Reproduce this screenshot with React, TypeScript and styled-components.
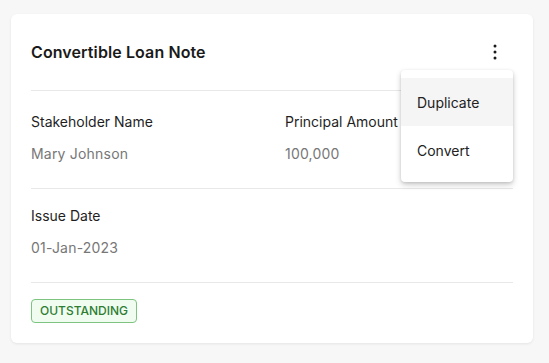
import React from 'react'
import styled, { createGlobalStyle } from 'styled-components'

const GlobalStyle = createGlobalStyle`
	body {
		margin: 0;
		background: #f7f7f7;
		font-family: Inter, "Noto Sans", sans-serif;
	}
`

const Page = styled.div`
	padding: 14px 16px 19px 11px;
`

const Card = styled.section`
	position: relative;
	width: 522px;
	box-sizing: border-box;
	background: #fff;
	border-radius: 6px;
	box-shadow: 0 1px 3px rgba(0, 0, 0, 0.08);
	padding: 0 20px 20px;
`

const Header = styled.div`
	display: flex;
	align-items: center;
	justify-content: space-between;
	height: 76px;
	border-bottom: 1px solid #e8e8e8;
`

const Title = styled.h2`
	margin: 0;
	font-size: 16px;
	font-weight: 600;
	letter-spacing: 0.1px;
	color: #1a1a1a;
`

const IconButton = styled.button`
	display: flex;
	align-items: center;
	justify-content: center;
	width: 24px;
	height: 24px;
	margin-right: 6px;
	padding: 0;
	border: none;
	background: none;
	color: #1a1a1a;
`

const Section = styled.div<{ $top: number; $bottom: number }>`
	display: grid;
	grid-template-columns: 1fr 1fr;
	column-gap: 26px;
	padding: ${p => p.$top}px 0 ${p => p.$bottom}px;
	border-bottom: 1px solid #e8e8e8;
`

const Field = styled.div`
	display: flex;
	flex-direction: column;
	gap: 14px;
`

const Label = styled.span`
	font-size: 14px;
	color: #1f1f1f;
	line-height: 18px;
`

const Value = styled.span`
	font-size: 14px;
	color: #777;
	line-height: 18px;
	letter-spacing: 0.2px;
`

const Footer = styled.div`
	padding-top: 16px;
`

const Badge = styled.span`
	display: inline-block;
	padding: 4px 8px;
	font-size: 12px;
	font-weight: 500;
	line-height: 14px;
	color: #2e7d32;
	background: #f1fcf1;
	border: 1px solid #7cc47f;
	border-radius: 4px;
`

const Menu = styled.ul`
	position: absolute;
	top: 56px;
	right: 20px;
	width: 112px;
	margin: 0;
	padding: 8px 0;
	list-style: none;
	background: #fff;
	border-radius: 4px;
	box-shadow: 0 3px 6px rgba(0, 0, 0, 0.18), 0 1px 3px rgba(0, 0, 0, 0.12);
`

const MenuItem = styled.li<{ $active?: boolean }>`
	height: 48px;
	display: flex;
	align-items: center;
	padding: 0 16px;
	font-size: 14px;
	color: #222;
	background: ${p => (p.$active ? '#f5f5f5' : 'transparent')};
`

function Kebab() {
	return (
		<svg width="4" height="16" viewBox="0 0 4 16" fill="currentColor">
			<circle cx="2" cy="2" r="1.5" />
			<circle cx="2" cy="8" r="1.5" />
			<circle cx="2" cy="14" r="1.5" />
		</svg>
	)
}

export default function App() {
	return (
		<>
			<GlobalStyle />
			<Page>
				<Card>
					<Header>
						<Title>Convertible Loan Note</Title>
						<IconButton aria-label="More">
							<Kebab />
						</IconButton>
					</Header>
					<Section $top={22} $bottom={25}>
						<Field>
							<Label>Stakeholder Name</Label>
							<Value>Mary Johnson</Value>
						</Field>
						<Field>
							<Label>Principal Amount</Label>
							<Value>100,000</Value>
						</Field>
					</Section>
					<Section $top={18} $bottom={25}>
						<Field>
							<Label>Issue Date</Label>
							<Value>01-Jan-2023</Value>
						</Field>
					</Section>
					<Footer>
						<Badge>OUTSTANDING</Badge>
					</Footer>
					<Menu>
						<MenuItem $active>Duplicate</MenuItem>
						<MenuItem>Convert</MenuItem>
					</Menu>
				</Card>
			</Page>
		</>
	)
}
